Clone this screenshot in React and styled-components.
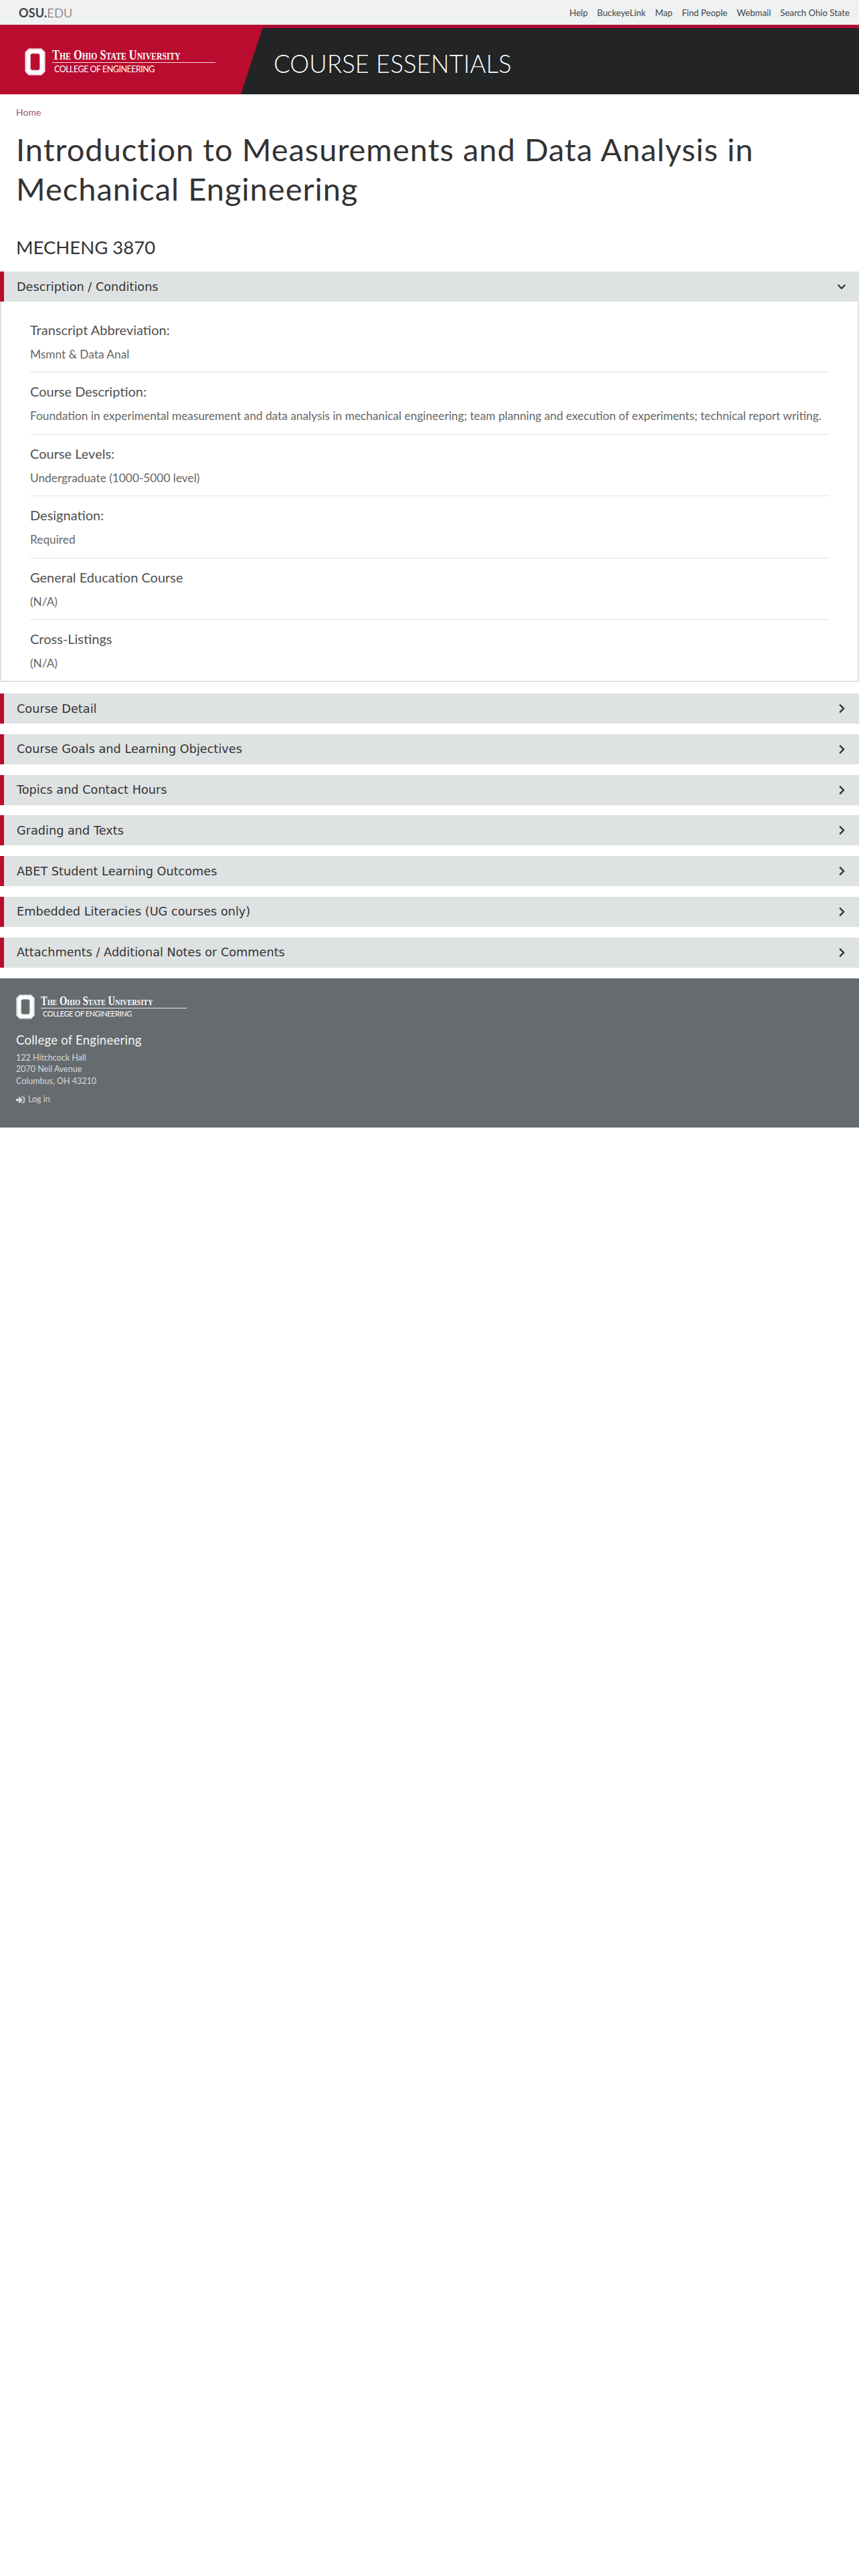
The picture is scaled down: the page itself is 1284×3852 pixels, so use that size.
import React from "react";
import styled, { createGlobalStyle } from "styled-components";
import { FaChevronDown, FaChevronRight, FaSignInAlt } from "react-icons/fa";

const Global = createGlobalStyle`
  html, body { margin: 0; padding: 0; background: #fff; }
  body { font-family: "Lato", "Liberation Sans", sans-serif; color: #333; }
  * { box-sizing: border-box; }
`;

const TopBar = styled.div`
  height: 37px; background: #eff1f3; display: flex; align-items: center;
  justify-content: space-between; padding: 0 14px 0 28px;
`;
const OsuEdu = styled.a`
  font-size: 18px; color: #3f4443; font-weight: 300; letter-spacing: .2px;
  b { font-weight: 700; }
`;
const TopLinks = styled.nav`display: flex; gap: 14px;`;
const TopLink = styled.a`font-size: 13.2px; color: #3f4443;`;

const Banner = styled.header`
  height: 104px; background: #222425; border-top: 5px solid #ab1032; display: flex; align-items: stretch;
`;
const Brand = styled.div`
  width: 394px; flex: none; background: #ba0c2f; clip-path: polygon(0 0, 100% 0, 360px 100%, 0 100%);
  margin-top: -5px; height: 104px; padding: 34px 0 0 37px;
`;
const SiteTitle = styled.div`
  margin-left: 15px; padding-top: 31px; font-size: 36.5px; line-height: 44px; font-weight: 300; color: #fff; letter-spacing: .1px;
`;
const LogoRow = styled.div`display: flex; gap: ${p => p.$gap}px; align-items: center;`;
const LogoText = styled.div`color: #fff; width: ${p => p.$w}px;`;
const Univ = styled.div`
  font-family: "Liberation Serif", serif; font-weight: 700; font-variant: small-caps;
  font-size: ${p => p.$size}px; line-height: ${p => p.$lh}px; white-space: nowrap;
  transform: scaleX(.78); transform-origin: left center;
`;
const LogoRule = styled.div`height: 1px; background: #fff; opacity: .85;`;
const College = styled.div`
  font-size: ${p => p.$size}px; line-height: ${p => p.$lh}px; padding-left: 3px; white-space: nowrap; letter-spacing: ${p => p.$sp}px;
`;

const Main = styled.main`padding: 0;`;
const Crumb = styled.a`
  display: block; padding: 18px 0 0 24px; font-size: 14px; line-height: 18px; color: #a0566a;
`;
const H1 = styled.h1`
  margin: 17px 0 0; padding: 0 24px; font-size: 47px; line-height: 58.5px; font-weight: 400; color: #333; letter-spacing: 1px;
`;
const H2 = styled.h2`
  margin: 41px 0 0; padding: 0 24px; font-size: 27.5px; line-height: 36px; font-weight: 400; color: #333;
`;
const Accordion = styled.section`margin-top: ${p => p.$mt}px;`;
const AccHead = styled.div`
  height: 45px; background: #dfe2e2; border-left: 6px solid #ba0c2f; display: flex; align-items: center;
  justify-content: space-between; padding: 0 19px 0 19px;
  font-family: "DejaVu Sans", sans-serif; font-size: 17.7px; color: #333;
`;
const Chevron = styled.span`display: flex; margin-right: ${p => p.$mr}px;`;
const AccBody = styled.div`
  border: 2px solid #dfe0e0; border-top: none; height: 569px; padding: 14px 43px 0;
`;
const Field = styled.div`
  height: 92.4px; padding-top: 16px; border-bottom: ${p => p.$last ? "none" : "1px solid #e2e2e2"};
`;
const Label = styled.div`font-size: 20px; line-height: 24px; color: #505050;`;
const Value = styled.div`margin-top: 13px; font-size: 17.3px; line-height: 24px; color: #666; white-space: nowrap;`;

const Footer = styled.footer`
  margin-top: 16px; height: 223px; background: #666b6f; padding: 24px 24px 0; color: #fff;
`;
const FootTitle = styled.div`margin-top: 19px; font-size: 18.5px; line-height: 24px; color: #f5f5f5; letter-spacing: .25px;`;
const Address = styled.div`margin-top: 6px; font-size: 12.5px; line-height: 17.5px; color: #d8d9db;`;
const LogIn = styled.a`
  margin-top: 10px; display: flex; align-items: center; gap: 5px; font-size: 12.5px; line-height: 18px; color: #d8d9db;
`;

const BlockO = ({ w, h, line, hole }) => (
  <svg width={w} height={h} viewBox="0 0 31 41">
    <path d="M6 .5h19l5.5 5.5v29l-5.5 5.5H6L.5 35V6z" fill="#fff" />
    <path d="M6.6 2h17.8l4.6 4.6v27.8L24.4 39H6.6L2 34.400V6.600z" fill="none" stroke={line} strokeWidth=".7" />
    <path d="M10.500 8h10l2 2v21l-2 2h-10l-2-2V10z" fill={hole} stroke={line} strokeWidth="1" />
  </svg>
);

const Logo = ({ o, oh, gap, w, usize, ulh, csize, clh, csp, line, hole }) => (
  <LogoRow $gap={gap}>
    <BlockO w={o} h={oh} line={line} hole={hole} />
    <LogoText $w={w}>
      <Univ $size={usize} $lh={ulh}>The Ohio State University</Univ>
      <LogoRule />
      <College $size={csize} $lh={clh} $sp={csp}>COLLEGE OF ENGINEERING</College>
    </LogoText>
  </LogoRow>
);

const fields = [
  ["Transcript Abbreviation:", "Msmnt & Data Anal"],
  ["Course Description:", "Foundation in experimental measurement and data analysis in mechanical engineering; team planning and execution of experiments; technical report writing."],
  ["Course Levels:", "Undergraduate (1000-5000 level)"],
  ["Designation:", "Required"],
  ["General Education Course", "(N/A)"],
  ["Cross-Listings", "(N/A)"],
];
const sections = ["Course Detail", "Course Goals and Learning Objectives", "Topics and Contact Hours", "Grading and Texts", "ABET Student Learning Outcomes", "Embedded Literacies (UG courses only)", "Attachments / Additional Notes or Comments"];
const links = ["Help", "BuckeyeLink", "Map", "Find People", "Webmail", "Search Ohio State"];

export default function App() {
  return (
    <>
      <Global />
      <TopBar>
        <OsuEdu><b>OSU.</b>EDU</OsuEdu>
        <TopLinks>{links.map(l => <TopLink key={l}>{l}</TopLink>)}</TopLinks>
      </TopBar>
      <Banner>
        <Brand>
          <Logo o={31} oh={41} gap={10} w={244} usize={21} ulh={22} csize={12.5} clh={19} csp={-.5} line="#e8a9b6" hole="#ba0c2f" />
        </Brand>
        <SiteTitle>COURSE ESSENTIALS</SiteTitle>
      </Banner>
      <Main>
        <Crumb>Home</Crumb>
        <H1>Introduction to Measurements and Data Analysis in Mechanical Engineering</H1>
        <H2>MECHENG 3870</H2>
        <Accordion $mt={18}>
          <AccHead>Description / Conditions<Chevron $mr={0}><FaChevronDown size={14} /></Chevron></AccHead>
          <AccBody>
            {fields.map((f, i) => (
              <Field key={f[0]} $last={i === fields.length - 1}>
                <Label>{f[0]}</Label>
                <Value>{f[1]}</Value>
              </Field>
            ))}
          </AccBody>
        </Accordion>
        {sections.map((s, i) => (
          <Accordion key={s} $mt={i === 0 ? 17 : 15.8}>
            <AccHead>{s}<Chevron $mr={-1}><FaChevronRight size={15} /></Chevron></AccHead>
          </Accordion>
        ))}
      </Main>
      <Footer>
        <Logo o={28} oh={37} gap={9} w={218} usize={18.7} ulh={20} csize={11} clh={16} csp={-.4} line="#b9bcbf" hole="#666b6f" />
        <FootTitle>College of Engineering</FootTitle>
        <Address>122 Hitchcock Hall<br />2070 Neil Avenue<br />Columbus, OH 43210</Address>
        <LogIn><FaSignInAlt size={13} />Log in</LogIn>
      </Footer>
    </>
  );
}
